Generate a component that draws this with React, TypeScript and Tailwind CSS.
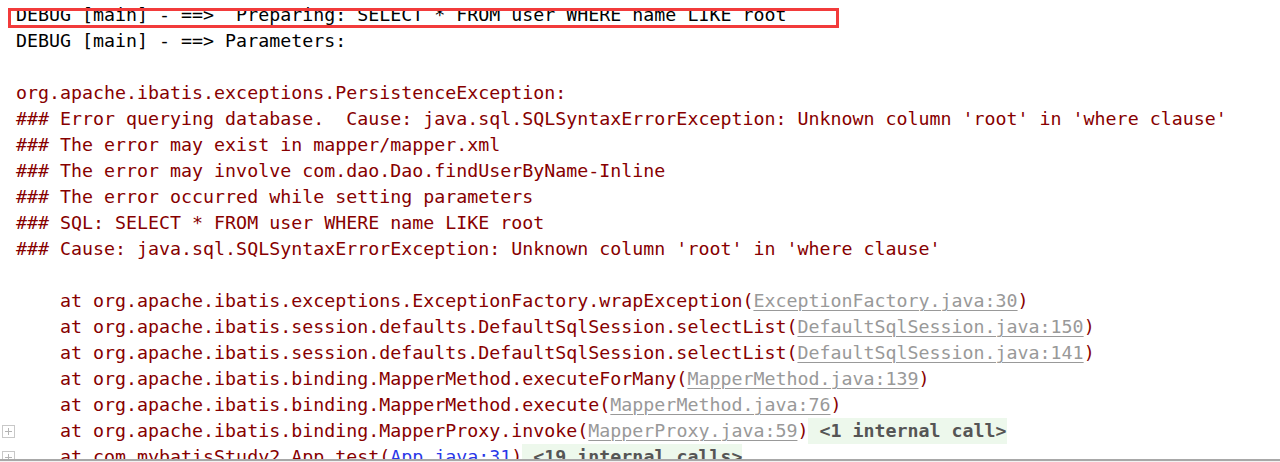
import React from 'react';

type Part = { t: string; kind?: 'link' | 'src' | 'fold' };
type Line = { color?: string; parts: Part[]; fold?: boolean };

const black = 'text-[#000000]';
const red = 'text-[#870000]';

// console lines, top to bottom
const lines: Line[] = [
  { color: black, parts: [{ t: 'DEBUG [main] - ==>  Preparing: SELECT * FROM user WHERE name LIKE root' }] },
  { color: black, parts: [{ t: 'DEBUG [main] - ==> Parameters: ' }] },
  { parts: [{ t: '' }] },
  { color: red, parts: [{ t: 'org.apache.ibatis.exceptions.PersistenceException: ' }] },
  { color: red, parts: [{ t: "### Error querying database.  Cause: java.sql.SQLSyntaxErrorException: Unknown column 'root' in 'where clause'" }] },
  { color: red, parts: [{ t: '### The error may exist in mapper/mapper.xml' }] },
  { color: red, parts: [{ t: '### The error may involve com.dao.Dao.findUserByName-Inline' }] },
  { color: red, parts: [{ t: '### The error occurred while setting parameters' }] },
  { color: red, parts: [{ t: '### SQL: SELECT * FROM user WHERE name LIKE root' }] },
  { color: red, parts: [{ t: "### Cause: java.sql.SQLSyntaxErrorException: Unknown column 'root' in 'where clause'" }] },
  { parts: [{ t: '' }] },
  { color: red, parts: [{ t: '    at org.apache.ibatis.exceptions.ExceptionFactory.wrapException(' }, { t: 'ExceptionFactory.java:30', kind: 'link' }, { t: ')' }] },
  { color: red, parts: [{ t: '    at org.apache.ibatis.session.defaults.DefaultSqlSession.selectList(' }, { t: 'DefaultSqlSession.java:150', kind: 'link' }, { t: ')' }] },
  { color: red, parts: [{ t: '    at org.apache.ibatis.session.defaults.DefaultSqlSession.selectList(' }, { t: 'DefaultSqlSession.java:141', kind: 'link' }, { t: ')' }] },
  { color: red, parts: [{ t: '    at org.apache.ibatis.binding.MapperMethod.executeForMany(' }, { t: 'MapperMethod.java:139', kind: 'link' }, { t: ')' }] },
  { color: red, parts: [{ t: '    at org.apache.ibatis.binding.MapperMethod.execute(' }, { t: 'MapperMethod.java:76', kind: 'link' }, { t: ')' }] },
  { color: red, fold: true, parts: [{ t: '    at org.apache.ibatis.binding.MapperProxy.invoke(' }, { t: 'MapperProxy.java:59', kind: 'link' }, { t: ')' }, { t: ' <1 internal call>', kind: 'fold' }] },
  { color: red, fold: true, parts: [{ t: '    at com.mybatisStudy2.App.test(' }, { t: 'App.java:31', kind: 'src' }, { t: ')' }, { t: ' <19 internal calls>', kind: 'fold' }] },
];

const FoldIcon = () => (
  <svg width="13" height="13" viewBox="0 0 13 13" className="mt-[7px] ml-[2px]">
    <rect x="0.5" y="0.5" width="12" height="12" fill="white" stroke="#c8c8c8" />
    <path d="M3 6.5h7M6.5 3v7" stroke="#b4b4b4" strokeWidth="1" />
  </svg>
);

export default function App() {
  return (
    <div className="w-[1280px] h-[462px] bg-white flex flex-col overflow-hidden">
      <div
        className="relative h-[459px] overflow-hidden pt-[2px] text-[18.3px] leading-[26px]"
        style={{ fontFamily: '"DejaVu Sans Mono", "Liberation Mono", monospace' }}
      >
        {lines.map((line, i) => (
          <div key={i} className="flex h-[26px]">
            <div className="w-[16px] shrink-0">{line.fold && <FoldIcon />}</div>
            <div className={`whitespace-pre ${line.color ?? ''}`}>
              {line.parts.map((p, j) =>
                p.kind === 'link' ? (
                  <span key={j} className="text-[#999999] underline underline-offset-[3px] decoration-1">{p.t}</span>
                ) : p.kind === 'src' ? (
                  <span key={j} className="text-[#2a37e8] underline underline-offset-[3px] decoration-1">{p.t}</span>
                ) : p.kind === 'fold' ? (
                  <span key={j} className="inline-block bg-[#edf8ec] text-[#555555] font-bold">{p.t}</span>
                ) : (
                  <span key={j}>{p.t}</span>
                )
              )}
            </div>
          </div>
        ))}
        {/* red highlight around the SQL line */}
        <div className="absolute left-[8px] top-[8px] w-[831px] h-[20px] border-[3px] border-[#f23b3b]" />
      </div>
      <div className="h-[3px] border-t-2 border-[#a8a8a8] bg-[#f2f2f2]" />
    </div>
  );
}
